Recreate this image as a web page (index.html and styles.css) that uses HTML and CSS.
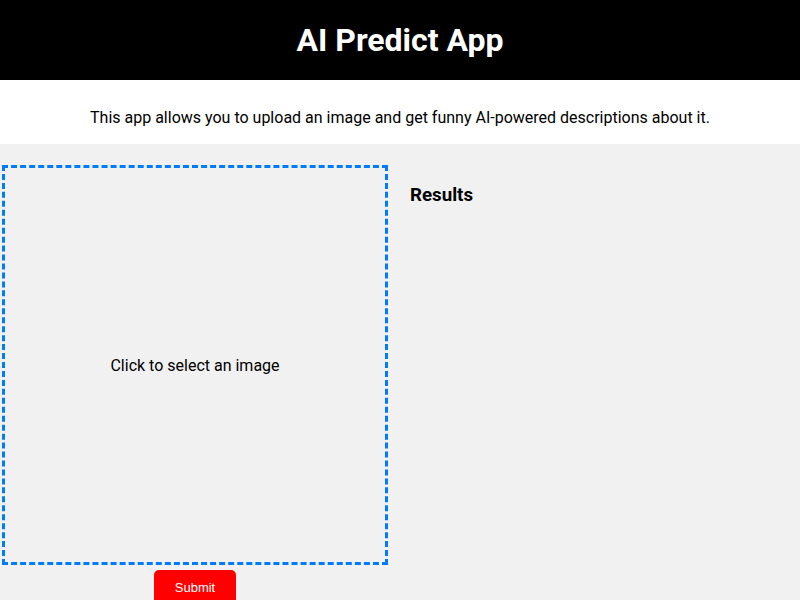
FILE: index.html
```html
<!DOCTYPE html>
<html lang="en">
<head>
  <meta charset="UTF-8">
  <title>AI Predict App</title>
  <link rel="stylesheet" href="styles.css">
</head>
<body>
  <header class="top">
    <h1>AI Predict App</h1>
  </header>
  <section class="intro">
    <p>This app allows you to upload an image and get funny AI-powered descriptions about it.</p>
  </section>
  <main class="main">
    <div class="upload-col">
      <div class="dropzone">Click to select an image</div>
      <button class="submit" type="button">Submit</button>
    </div>
    <div class="results">
      <h3>Results</h3>
    </div>
  </main>
</body>
</html>
```

FILE: styles.css
```css
body {
  margin: 0;
  font-family: Roboto, "Liberation Sans", sans-serif;
  background-color: #f1f1f1;
  color: #000;
}
.top {
  background-color: #000;
  color: white;
  text-align: center;
  padding: 21px 0;
}
.top h1 {
  margin: 0;
  font-size: 32px;
  line-height: 38px;
}
.intro {
  background-color: white;
  text-align: center;
  padding: 28px 20px 17px;
}
.intro p {
  margin: 0;
  font-size: 16px;
}
.main {
  display: flex;
  gap: 22px;
  padding: 21px 0 0 2px;
}
.upload-col {
  width: 386px;
  display: flex;
  flex-direction: column;
  align-items: center;
  gap: 5px;
}
.dropzone {
  box-sizing: border-box;
  width: 386px;
  height: 400px;
  border: 3px dashed #007bff;
  display: flex;
  align-items: center;
  justify-content: center;
  font-size: 16px;
  cursor: pointer;
}
.submit {
  background-color: #ff0000;
  color: white;
  border: none;
  border-radius: 5px;
  padding: 10px 21px;
  font-family: "Liberation Sans", Arial, sans-serif;
  font-size: 13px;
  cursor: pointer;
}
.results h3 {
  margin: 18.72px 0;
  font-size: 18.72px;
}
```
